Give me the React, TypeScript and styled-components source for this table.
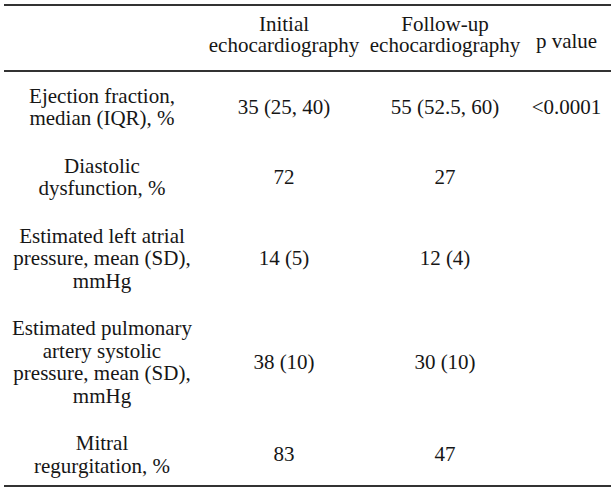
import styled, { createGlobalStyle } from 'styled-components';

const GlobalStyle = createGlobalStyle`
    html, body {
        margin: 0;
        padding: 0;
        background: #fff;
    }
`;

const Page = styled.div`
    padding: 4px 3px 0 4px;
`;

const Table = styled.table`
    width: 607px;
    border-collapse: collapse;
    table-layout: fixed;
    font-family: 'Liberation Serif', 'Times New Roman', serif;
    font-size: 21px;
    color: #161616;
    border-top: 2px solid #333;
    border-bottom: 2px solid #333;
`;

const HeadRow = styled.tr`
    border-bottom: 2px solid #333;
`;

const HeadCell = styled.th<{ $single?: boolean }>`
    font-family: 'Liberation Serif', 'Times New Roman', serif;
    font-size: 21px;
    font-weight: normal;
    text-align: center;
    line-height: 21px;
    padding: ${p => (p.$single ? '22px 0 15px' : '8px 0 14px')};
    vertical-align: ${p => (p.$single ? 'middle' : 'bottom')};
`;

const Cell = styled.td<{ $last?: boolean }>`
    font-family: 'Liberation Serif', 'Times New Roman', serif;
    font-size: 21px;
    text-align: center;
    vertical-align: middle;
    line-height: 22.5px;
    padding: 12.5px 0 ${p => (p.$last ? '8px' : '12.5px')};
`;

interface Row {
    label: string[];
    initial: string;
    followUp: string;
    p?: string;
}

const rows: Row[] = [
    { label: ['Ejection fraction,', 'median (IQR), %'], initial: '35 (25, 40)', followUp: '55 (52.5, 60)', p: '<0.0001' },
    { label: ['Diastolic', 'dysfunction, %'], initial: '72', followUp: '27' },
    { label: ['Estimated left atrial', 'pressure, mean (SD),', 'mmHg'], initial: '14 (5)', followUp: '12 (4)' },
    {
        label: ['Estimated pulmonary', 'artery systolic', 'pressure, mean (SD),', 'mmHg'],
        initial: '38 (10)',
        followUp: '30 (10)',
    },
    { label: ['Mitral', 'regurgitation, %'], initial: '83', followUp: '47' },
];

const Lines = ({ lines }: { lines: string[] }) => (
    <>
        {lines.map((l, i) => (
            <span key={i}>
                {i > 0 && <br />}
                {l}
            </span>
        ))}
    </>
);

const App = () => {
    return (
        <Page>
            <GlobalStyle />
            <Table>
                <colgroup>
                    <col style={{ width: '196px' }} />
                    <col style={{ width: '168px' }} />
                    <col style={{ width: '154px' }} />
                    <col style={{ width: '89px' }} />
                </colgroup>
                <thead>
                    <HeadRow>
                        <HeadCell />
                        <HeadCell>
                            <Lines lines={['Initial', 'echocardiography']} />
                        </HeadCell>
                        <HeadCell>
                            <Lines lines={['Follow-up', 'echocardiography']} />
                        </HeadCell>
                        <HeadCell $single>p value</HeadCell>
                    </HeadRow>
                </thead>
                <tbody>
                    {rows.map((r, i) => {
                        const last = i === rows.length - 1;
                        return (
                            <tr key={i}>
                                <Cell $last={last}>
                                    <Lines lines={r.label} />
                                </Cell>
                                <Cell $last={last}>{r.initial}</Cell>
                                <Cell $last={last}>{r.followUp}</Cell>
                                <Cell $last={last}>{r.p}</Cell>
                            </tr>
                        );
                    })}
                </tbody>
            </Table>
        </Page>
    );
};

export default App;
